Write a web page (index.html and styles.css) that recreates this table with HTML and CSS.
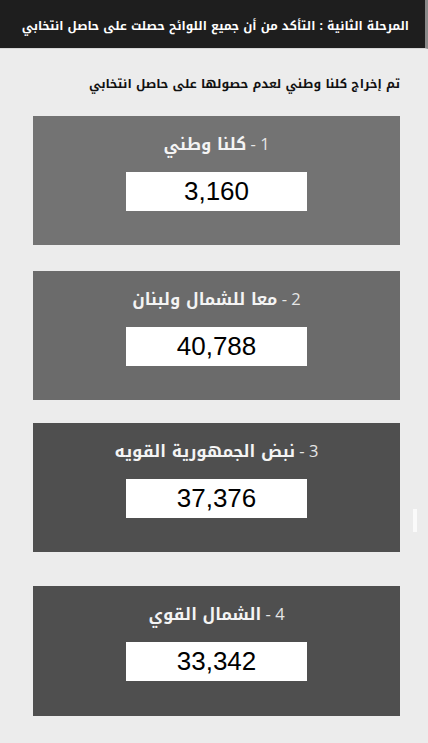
FILE: index.html
```html
<!DOCTYPE html>
<html lang="ar" dir="rtl">
<head>
<meta charset="utf-8">
<link rel="stylesheet" href="styles.css">
</head>
<body>
<header class="topbar"><span class="topbar-text">المرحلة الثانية : التأكد من أن جميع اللوائح حصلت على حاصل انتخابي</span></header>
<main class="content">
  <p class="subtitle">تم إخراج كلنا وطني لعدم حصولها على حاصل انتخابي</p>
  <section class="card card-1">
    <h2 class="card-title"><span class="num">1 - </span>كلنا وطني</h2>
    <div class="votes">3,160</div>
  </section>
  <section class="card card-2">
    <h2 class="card-title"><span class="num">2 - </span>معا للشمال ولبنان</h2>
    <div class="votes">40,788</div>
  </section>
  <section class="card card-3">
    <h2 class="card-title"><span class="num">3 - </span>نبض الجمهورية القويه</h2>
    <div class="votes">37,376</div>
    <span class="edge-mark"></span>
  </section>
  <section class="card card-4">
    <h2 class="card-title"><span class="num">4 - </span>الشمال القوي</h2>
    <div class="votes">33,342</div>
  </section>
</main>
</body>
</html>
```
FILE: styles.css
```css
html, body {
  margin: 0;
  padding: 0;
}
body {
  background: #ececec;
  font-family: "Noto Kufi Arabic", "Noto Sans Arabic", "DejaVu Sans", "Noto Sans", sans-serif;
  width: 428px;
  height: 743px;
  overflow: hidden;
}
.topbar {
  height: 49px;
  display: flex;
  align-items: center;
  background: #1e1e1e;
  color: #ffffff;
  padding-right: 16px;
  padding-top: 3px;
  border-right: 3px solid #8a8a8a;
  box-sizing: border-box;
  border-bottom: 1px solid #d6d6d6;
  overflow: hidden;
}
.topbar-text {
  font-size: 12px;
  line-height: 20px;
  font-weight: bold;
  white-space: nowrap;
}
.content {
  display: flex;
  flex-direction: column;
  padding: 0 28px 0 33px;
}
.subtitle {
  margin: 25px 0 0 0;
  font-size: 12.3px;
  line-height: 20px;
  font-weight: bold;
  color: #111111;
}
.card {
  position: relative;
  height: 129px;
  display: flex;
  flex-direction: column;
  align-items: center;
  box-sizing: border-box;
  padding-top: 16px;
}
.card-1 { background: #737373; margin-top: 22px; }
.card-2 { background: #6b6b6b; margin-top: 26px; }
.card-3 { background: #4f4f4f; margin-top: 23px; }
.card-4 { background: #4f4f4f; margin-top: 34px; height: 130px; }
.card-title {
  margin: 0;
  font-size: 16.5px;
  line-height: 24px;
  font-weight: bold;
  color: #f4f4f4;
}
.num {
  font-family: "Open Sans", "DejaVu Sans", sans-serif;
  font-weight: normal;
  color: #e6e6e6;
}
.votes {
  margin-top: 15px;
  width: 181px;
  height: 39px;
  background: #ffffff;
  color: #000000;
  font-family: "Liberation Sans", Arial, sans-serif;
  font-size: 26px;
  line-height: 39px;
  text-align: center;
  direction: ltr;
}
.edge-mark {
  position: absolute;
  left: 380px;
  top: 86px;
  width: 4px;
  height: 23px;
  background: #fafafa;
}
```
